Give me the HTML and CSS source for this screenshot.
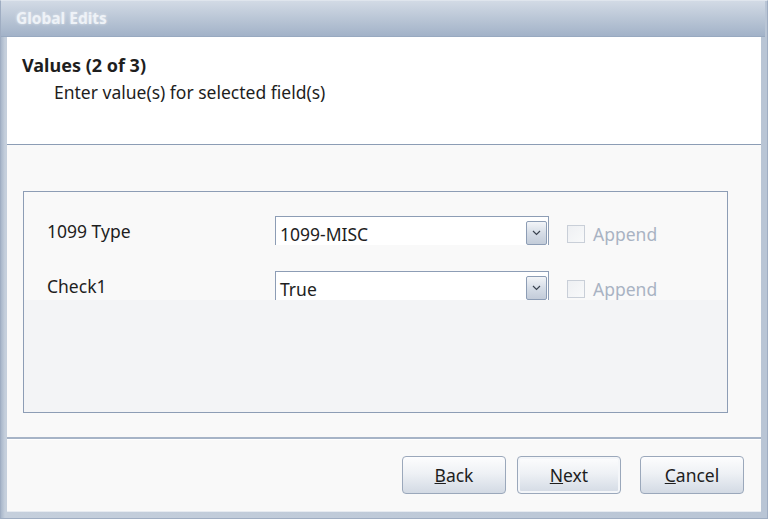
FILE: index.html
```html
<!DOCTYPE html>
<html lang="en">
<head>
    <meta charset="UTF-8">
    <title>Global Edits</title>
    <link rel="stylesheet" href="styles.css">
</head>
<body>
    <div class="window">
        <div class="titlebar">Global Edits</div>
        <div class="frame">
            <div class="header">
                <h1>Values (2 of 3)</h1>
                <p>Enter value(s) for selected field(s)</p>
            </div>
            <div class="body">
                <div class="group">
                    <div class="rows">
                        <div class="row">
                            <span class="label">1099 Type</span>
                            <div class="combo">
                                <span class="combo-text">1099-MISC</span>
                                <span class="combo-btn">
                                    <svg width="9" height="6" viewBox="0 0 9 6"><path d="M1 1 L4.5 4.5 L8 1" fill="none" stroke="#3b4350" stroke-width="1.2"/></svg>
                                </span>
                            </div>
                            <label class="check"><span class="box"></span>Append</label>
                        </div>
                        <div class="row">
                            <span class="label">Check1</span>
                            <div class="combo">
                                <span class="combo-text">True</span>
                                <span class="combo-btn">
                                    <svg width="9" height="6" viewBox="0 0 9 6"><path d="M1 1 L4.5 4.5 L8 1" fill="none" stroke="#3b4350" stroke-width="1.2"/></svg>
                                </span>
                            </div>
                            <label class="check"><span class="box"></span>Append</label>
                        </div>
                    </div>
                </div>
            </div>
            <div class="footer">
                <button class="btn"><u>B</u>ack</button>
                <button class="btn btn-default"><u>N</u>ext</button>
                <button class="btn btn-cancel"><u>C</u>ancel</button>
            </div>
        </div>
    </div>
</body>
</html>
```

FILE: styles.css
```css
body {
    margin: 0;
    font-family: "Noto Sans", "Open Sans", sans-serif;
    color: #1e1e1e;
    background: #b7c3d3;
}

.window {
    width: 768px;
    height: 519px;
    display: flex;
    flex-direction: column;
    background: linear-gradient(to right, #a9b7ca, #c5cfdc 4px, #b9c5d5);
    box-sizing: border-box;
    border: 1px solid #9fadc2;
    border-top-color: #dfe5ed;
}

.titlebar {
    height: 35px;
    line-height: 34px;
    padding-left: 15px;
    font-size: 15.5px;
    font-weight: bold;
    color: #eef2f7;
    text-shadow: 0 0 3px rgba(255, 255, 255, 0.6);
    background: linear-gradient(to bottom, #d2dae5, #b5c2d3 60%, #a2b2c8);
    border-bottom: 1px solid #98a9c0;
    margin-right: 2px;
}

.frame {
    flex: 1;
    display: flex;
    flex-direction: column;
    margin: 0 6px 6px 6px;
    background: #f9f9f9;
    border-bottom: 1px solid #e6eaf0;
}

.header {
    height: 108px;
    background: #fff;
    border-bottom: 1px solid #8c9db5;
    padding: 16px 0 0 15px;
    box-sizing: border-box;
}

.header h1 {
    margin: 0;
    font-size: 18px;
    font-weight: bold;
    line-height: 24px;
}

.header p {
    margin: 3px 0 0 32px;
    font-size: 17.5px;
    line-height: 24px;
}

.body {
    height: 294px;
    padding: 46px 33px 0 16px;
    box-sizing: border-box;
    border-bottom: 2px solid #a7b4c7;
}

.group {
    height: 222px;
    border: 1px solid #8d9db5;
    background: #f3f4f6;
    box-sizing: border-box;
}

.rows {
    height: 108px;
    background: #f9f9f9;
    padding: 24px 0 0 23px;
    box-sizing: border-box;
    overflow: hidden;
}

.row {
    display: flex;
    align-items: flex-start;
    height: 55px;
}

.label {
    width: 228px;
    font-size: 17.5px;
    line-height: 30px;
    margin-top: 0;
}

.combo {
    width: 274px;
    height: 29px;
    background: #fff;
    border: 1px solid #8d9db5;
    border-bottom: none;
    box-sizing: border-box;
    display: flex;
    justify-content: space-between;
    align-items: flex-start;
    padding: 4px 1px 0 4px;
}

.combo-text {
    font-size: 17.5px;
    line-height: 24px;
    margin-top: 1px;
}

.combo-btn {
    width: 21px;
    height: 24px;
    box-sizing: border-box;
    border: 1px solid #8d9db5;
    border-radius: 2px;
    background: linear-gradient(to bottom, #f3f5f8, #d6dde7 50%, #c3ccd9);
    display: flex;
    align-items: center;
    justify-content: center;
}

.check {
    display: flex;
    align-items: center;
    height: 20px;
    margin-left: 18px;
    margin-top: 8px;
    font-size: 17.5px;
    line-height: 20px;
    color: #a9b3c3;
}

.check .box {
    width: 18px;
    height: 18px;
    box-sizing: border-box;
    border: 1px solid #c9cfd8;
    background: linear-gradient(to bottom right, #eef0f3, #f8f9fa);
    margin-right: 8px;
}

.footer {
    flex: 1;
    display: flex;
    justify-content: flex-end;
    align-items: flex-start;
    padding: 16px 17px 0 0;
    border-top: 1px solid #fff;
}

.btn {
    width: 104px;
    height: 38px;
    margin-left: 11px;
    font-family: inherit;
    font-size: 17.5px;
    color: #1e1e1e;
    border: 1px solid #9ba8bb;
    border-radius: 4px;
    background: linear-gradient(to bottom, #fdfdfe, #eef1f5 45%, #d3dae4);
    padding: 0;
}

.btn-default {
    box-shadow: inset 0 0 0 2px #f4f6f9;
}

.btn-cancel {
    margin-left: 19px;
}
```
